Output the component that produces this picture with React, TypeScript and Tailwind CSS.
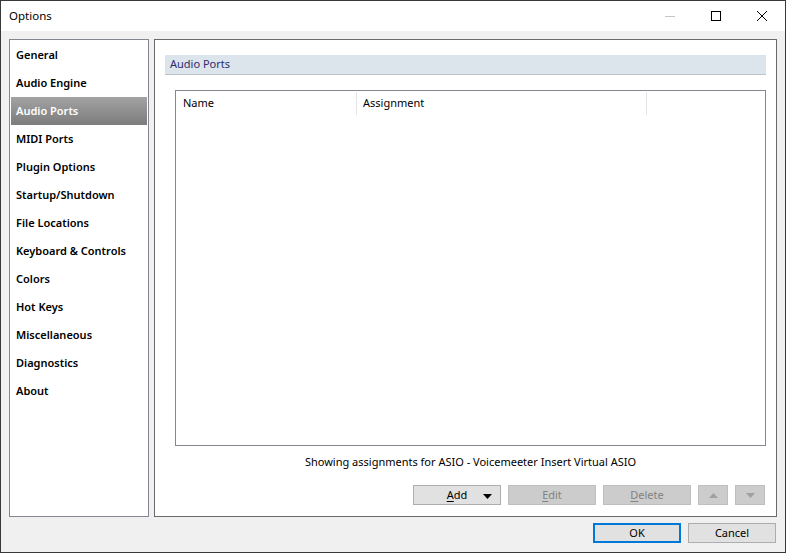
import React from "react";

const font = { fontFamily: '"Noto Sans", "Open Sans", sans-serif' };

const items = [
  "General",
  "Audio Engine",
  "Audio Ports",
  "MIDI Ports",
  "Plugin Options",
  "Startup/Shutdown",
  "File Locations",
  "Keyboard & Controls",
  "Colors",
  "Hot Keys",
  "Miscellaneous",
  "Diagnostics",
  "About",
];

export default function App() {
  return (
    <div
      className="w-[786px] h-[553px] border border-[#3a3a3a] bg-[#f0f0f0] flex flex-col text-[11px] text-black overflow-hidden"
      style={font}
    >
      {/* Title bar */}
      <div className="h-[30px] bg-white flex items-center shrink-0 relative">
        <span className="pl-[8px] text-[11.5px] text-black -mt-[1px]">Options</span>
        <div className="ml-auto flex items-center h-full">
          <div className="w-[46px] h-full flex items-center justify-center">
            <svg width="10" height="10" viewBox="0 0 10 10">
              <line x1="0" y1="5.5" x2="10" y2="5.5" stroke="#c6c6c6" strokeWidth="1" />
            </svg>
          </div>
          <div className="w-[46px] h-full flex items-center justify-center">
            <svg width="10" height="10" viewBox="0 0 10 10">
              <rect x="0.5" y="0.5" width="9" height="9" fill="none" stroke="#000" strokeWidth="1" />
            </svg>
          </div>
          <div className="w-[46px] h-full flex items-center justify-center">
            <svg width="10" height="10" viewBox="0 0 10 10">
              <path d="M0 0 L10 10 M10 0 L0 10" stroke="#000" strokeWidth="1" />
            </svg>
          </div>
        </div>
      </div>

      {/* Body */}
      <div className="flex-1 flex flex-col px-[8px] pt-[8px] pb-[9px]">
        <div className="flex gap-[5px] h-[478px]">
          {/* Left list */}
          <div className="w-[140px] h-full border border-[#828790] bg-white p-[1px] flex flex-col">
            {items.map((it) => {
              const sel = it === "Audio Ports";
              return (
                <div
                  key={it}
                  className={
                    "h-[28px] flex items-center pl-[5px] font-semibold " +
                    (sel ? "bg-gradient-to-b from-[#a3a3a3] to-[#7c7c7c] text-white" : "text-black")
                  }
                >
                  {it}
                </div>
              );
            })}
          </div>

          {/* Right panel */}
          <div className="flex-1 h-full border border-[#6a6a6a] bg-white flex flex-col px-[10px] pt-[15px] pb-[11px]">
            <div className="h-[20px] bg-[#dce4ec] border-b border-[#bfc4c9] flex items-center pl-[5px] text-[#2d2d6e] shrink-0">
              Audio Ports
            </div>
            <div className="mt-[15px] ml-[10px] h-[356px] border border-[#828790] bg-white flex flex-col shrink-0">
              <div className="h-[25px] flex items-stretch">
                <div className="w-[181px] flex items-center pl-[7px] border-r border-[#e5e5e5] my-[1px]">Name</div>
                <div className="w-[290px] flex items-center pl-[6px] border-r border-[#e5e5e5] my-[1px]">Assignment</div>
                <div className="flex-1" />
              </div>
            </div>
            <div className="ml-[10px] h-[34px] flex items-center justify-center">
              Showing assignments for ASIO - Voicemeeter Insert Virtual ASIO
            </div>
            <div className="mt-[6px] flex justify-end gap-[7px] pr-[1px]">
              <div className="w-[88px] h-[20px] bg-[#e1e1e1] border border-[#adadad] flex items-center relative">
                <span className="flex-1 text-center">
                  <span className="underline underline-offset-2">A</span>dd
                </span>
                <svg width="9" height="5" viewBox="0 0 9 5" className="absolute right-[8px] top-[8px]">
                  <path d="M0 0 L9 0 L4.5 5 Z" fill="#000" />
                </svg>
              </div>
              <div className="w-[88px] h-[20px] bg-[#cccccc] border border-[#bfbfbf] flex items-center justify-center text-[#838383]">
                <span>
                  <span className="underline underline-offset-2">E</span>dit
                </span>
              </div>
              <div className="w-[88px] h-[20px] bg-[#cccccc] border border-[#bfbfbf] flex items-center justify-center text-[#838383]">
                <span>
                  <span className="underline underline-offset-2">D</span>elete
                </span>
              </div>
              <div className="w-[30px] h-[20px] bg-[#cccccc] border border-[#bfbfbf] flex items-center justify-center">
                <svg width="9" height="5" viewBox="0 0 9 5">
                  <path d="M0 5 L9 5 L4.5 0 Z" fill="#a0a0a0" />
                </svg>
              </div>
              <div className="w-[30px] h-[20px] bg-[#cccccc] border border-[#bfbfbf] flex items-center justify-center">
                <svg width="9" height="5" viewBox="0 0 9 5">
                  <path d="M0 0 L9 0 L4.5 5 Z" fill="#a0a0a0" />
                </svg>
              </div>
            </div>
          </div>
        </div>

        {/* Bottom buttons */}
        <div className="mt-[6px] h-[20px] flex justify-end gap-[7px] pr-[1px]">
          <div className="w-[88px] h-[20px] bg-[#e1e1e1] border-2 border-[#0078d7] flex items-center justify-center">
            OK
          </div>
          <div className="w-[88px] h-[20px] bg-[#e1e1e1] border border-[#adadad] flex items-center justify-center">
            Cancel
          </div>
        </div>
      </div>
    </div>
  );
}
